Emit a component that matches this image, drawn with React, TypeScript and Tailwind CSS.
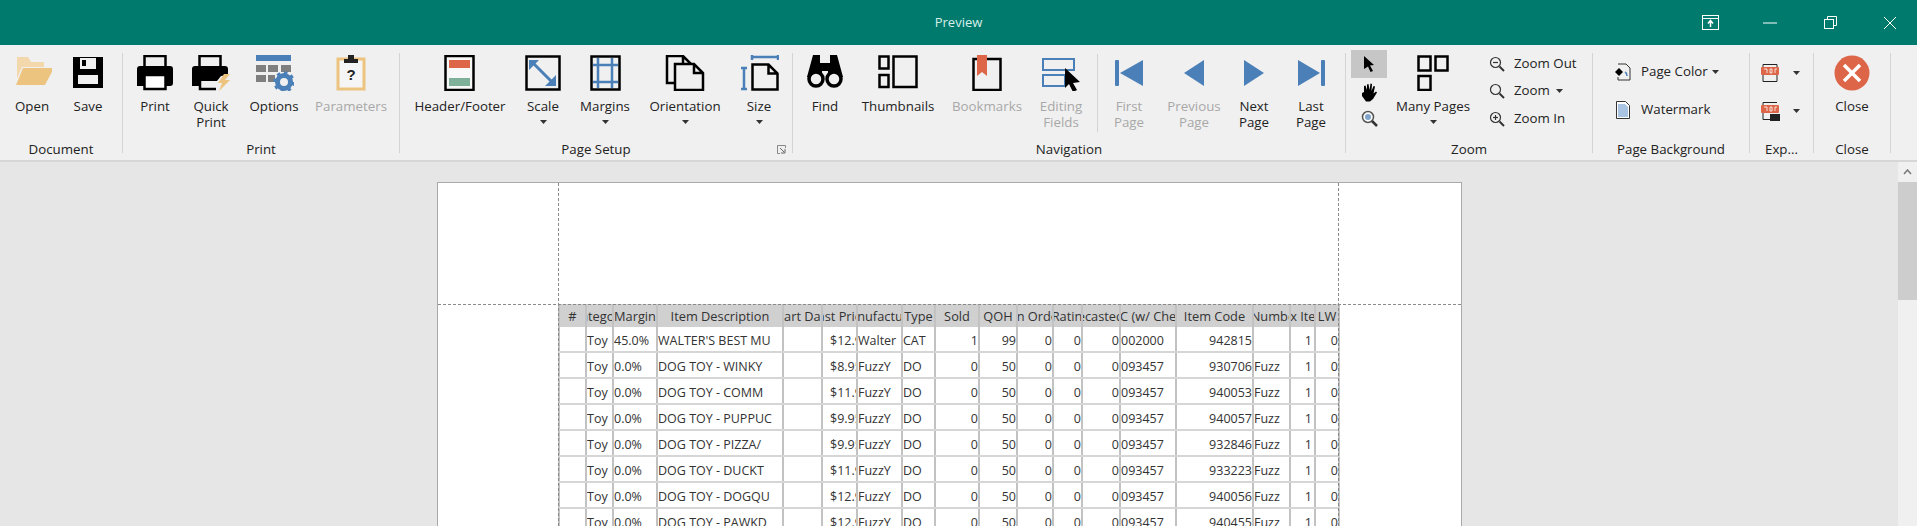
import React from 'react';

const BLUE = '#4a7fb8';
const ORANGE = '#dd6548';
const TAN = '#ecc47f';

function Icon({ children }: { children: React.ReactNode }) {
  return (
    <svg width="40" height="36" viewBox="0 0 40 36" fill="none" className="shrink-0">
      {children}
    </svg>
  );
}

function Caret({ className = '' }: { className?: string }) {
  return (
    <svg width="7" height="4" viewBox="0 0 7 4" className={className}>
      <path d="M0 0h7L3.5 4z" fill="#333" />
    </svg>
  );
}

const PageShape = ({ x, y, w, h, f = 9, sw = 2.5, fill = 'none' }: { x: number; y: number; w: number; h: number; f?: number; sw?: number; fill?: string }) => (
  <path
    d={`M${x} ${y}h${w - f}l${f} ${f}v${h - f}h${-w}zM${x + w - f} ${y}v${f}h${f}`}
    stroke="#000"
    strokeWidth={sw}
    fill={fill}
  />
);

const icons = {
  open: (
    <Icon>
      <path d="M5 2h11l3 5h13v5H10L5 24z" fill="#f3d8ab" />
      <path d="M11 13h31l-9 17H4z" fill={TAN} />
    </Icon>
  ),
  save: (
    <Icon>
      <path fillRule="evenodd" d="M5 2h30v31H5zM12 3v11h16V3zM10 20v9h20v-9z" fill="#000" />
      <rect x="14" y="5" width="4" height="6" fill="#000" />
    </Icon>
  ),
  print: (
    <Icon>
      <rect x="9.500" y="1" width="21" height="14" stroke="#000" strokeWidth="2.500" fill="#f0f0f0" />
      <path d="M5 11h30a3 3 0 0 1 3 3v14a3 3 0 0 1-3 3H2V14a3 3 0 0 1 3-3z" fill="#000" />
      <rect x="9.500" y="20" width="21" height="14" stroke="#000" strokeWidth="2.500" fill="#fff" />
    </Icon>
  ),
  quick: (
    <Icon>
      <rect x="8.500" y="1" width="21" height="14" stroke="#000" strokeWidth="2.500" fill="#f0f0f0" />
      <path d="M4 11h30a3 3 0 0 1 3 3v6l-7 1-4 5H8v5H1V14a3 3 0 0 1 3-3z" fill="#000" />
      <path d="M9 19.500h19M9 19.500v14.500h16" stroke="#000" strokeWidth="2.500" />
      <path d="M33 19h6l-5 6h5L28 36l3-8h-4z" fill={TAN} />
    </Icon>
  ),
  options: (
    <Icon>
      <rect x="2" y="0" width="35" height="6" fill={BLUE} />
      <g fill="#7f7f7f">
        <rect x="2" y="10" width="10" height="7" />
        <rect x="14" y="10" width="10" height="7" />
        <rect x="27" y="10" width="10" height="7" />
        <rect x="2" y="20" width="10" height="7" />
        <rect x="14" y="20" width="7" height="7" />
      </g>
      <circle cx="30" cy="27" r="6.500" stroke={BLUE} strokeWidth="5" fill="#f0f0f0" />
      <circle cx="30" cy="27" r="9.500" stroke={BLUE} strokeWidth="2.500" strokeDasharray="3.500 3.900" />
    </Icon>
  ),
  parameters: (
    <Icon>
      <rect x="7" y="4" width="26" height="30" stroke={TAN} strokeWidth="3" fill="#f5f5f5" />
      <path d="M13 8V4h4V0h6v4h4v4z" fill="#222" />
      <text x="20" y="25" textAnchor="middle" fontSize="15" fontWeight="700" fontFamily="Liberation Sans, sans-serif" fill="#222">?</text>
    </Icon>
  ),
  header: (
    <Icon>
      <rect x="5.500" y="1" width="28" height="34" stroke="#000" strokeWidth="2.500" fill="#f8f8f8" />
      <rect x="9" y="5" width="21" height="8" fill={ORANGE} />
      <rect x="9" y="23" width="21" height="8" fill="#7fb09a" />
    </Icon>
  ),
  scale: (
    <Icon>
      <rect x="3.500" y="1.500" width="33" height="33" stroke="#000" strokeWidth="2.500" />
      <path d="M9 7l20 20" stroke={BLUE} strokeWidth="3" />
      <path d="M6 5h10L6 15zM33 31H22l11-11z" fill={BLUE} />
    </Icon>
  ),
  margins: (
    <Icon>
      <rect x="6.500" y="1.500" width="28" height="33" stroke="#000" strokeWidth="2.500" />
      <path d="M13 3v30M27 3v30M8 10h25M8 27h25" stroke={BLUE} strokeWidth="2.500" />
    </Icon>
  ),
  orientation: (
    <Icon>
      <PageShape x={2} y={1} w={25} h={27} />
      <PageShape x={10} y={9} w={28} h={26} fill="#f0f0f0" />
    </Icon>
  ),
  size: (
    <Icon>
      <path d="M13 2h26M13 0v5M39 0v5M5 13v21M2 13h6M2 34h6" stroke={BLUE} strokeWidth="2.500" />
      <PageShape x={13.500} y={9.500} w={25} h={25} />
    </Icon>
  ),
  find: (
    <Icon>
      <path d="M8 0h7v8h10V0h7l6 22H23v-6h-6v6H2z" fill="#000" />
      <circle cx="11" cy="24" r="7" stroke="#000" strokeWidth="3.500" fill="#f0f0f0" />
      <circle cx="29" cy="24" r="7" stroke="#000" strokeWidth="3.500" fill="#f0f0f0" />
    </Icon>
  ),
  thumbs: (
    <Icon>
      <g stroke="#000" strokeWidth="2.500">
        <rect x="1.500" y="1.500" width="9" height="12" />
        <rect x="1.500" y="20" width="9" height="12" />
        <rect x="15.500" y="1.500" width="23" height="30.500" />
      </g>
    </Icon>
  ),
  bookmarks: (
    <Icon>
      <rect x="6.500" y="4" width="27" height="31" stroke="#000" strokeWidth="2.500" />
      <path d="M10 0h10v21l-5-4-5 4z" fill={ORANGE} />
    </Icon>
  ),
  editing: (
    <Icon>
      <g stroke={BLUE} strokeWidth="2">
        <rect x="2" y="4" width="31" height="11" />
        <rect x="2" y="20" width="22" height="11" />
      </g>
      <path d="M24 13l15 14-7 1 4 7-4 2-4-8-4 4z" fill="#000" />
    </Icon>
  ),
  first: (
    <Icon>
      <rect x="6" y="5" width="4" height="26" rx="1" fill={BLUE} />
      <path d="M34 5v26L11 18z" fill={BLUE} />
    </Icon>
  ),
  prev: (
    <Icon>
      <path d="M30 5v26L10 18z" fill={BLUE} />
    </Icon>
  ),
  next: (
    <Icon>
      <path d="M10 5v26l20-13z" fill={BLUE} />
    </Icon>
  ),
  last: (
    <Icon>
      <path d="M7 5v26l22-13z" fill={BLUE} />
      <rect x="30" y="5" width="4" height="26" rx="1" fill={BLUE} />
    </Icon>
  ),
  many: (
    <Icon>
      <g stroke="#000" strokeWidth="2.500">
        <rect x="5.500" y="1.500" width="12" height="14" />
        <rect x="22.500" y="1.500" width="12" height="14" />
        <rect x="5.500" y="21" width="12" height="14" />
      </g>
    </Icon>
  ),
  close: (
    <Icon>
      <circle cx="20" cy="18" r="17.500" fill={ORANGE} />
      <path d="M12 10l16 16M28 10L12 26" stroke="#fff" strokeWidth="3.500" />
    </Icon>
  ),
};

function RibbonButton({ w, icon, label, line2, disabled, caret }: { w: string; icon: React.ReactNode; label: string; line2?: string; disabled?: boolean; caret?: boolean }) {
  return (
    <div className={`${w} flex flex-col items-center shrink-0 pt-[9px]`}>
      {icon}
      <div className={`mt-[7px] text-center leading-4 whitespace-nowrap ${disabled ? 'text-[#a8a8a8]' : 'text-[#222]'}`}>
        <div>{label}</div>
        {line2 && <div>{line2}</div>}
      </div>
      {caret && <Caret className="mt-[6px]" />}
    </div>
  );
}

function Group({ w, label, children }: { w: string; label: string; children: React.ReactNode }) {
  return (
    <div className={`${w} shrink-0 flex flex-col`}>
      <div className="flex h-[95px]">{children}</div>
      <div className="text-center leading-4 text-[#222]">{label}</div>
    </div>
  );
}

const Sep = () => <div className="w-px shrink-0 my-[7px] bg-[#d4d4d4]" />;

function Lens({ mode }: { mode: 'out' | 'plain' | 'in' }) {
  return (
    <svg width="16" height="16" viewBox="0 0 16 16" fill="none" stroke="#333" strokeWidth="1.200" className="shrink-0">
      <circle cx="6.500" cy="6.500" r="5" />
      <path d="M10.500 10.500L15 15" strokeWidth="2" />
      {mode !== 'plain' && <path d="M4 6.500h5" />}
      {mode === 'in' && <path d="M6.500 4v5" />}
    </svg>
  );
}

const zoomItems = [
  { mode: 'out' as const, label: 'Zoom Out' },
  { mode: 'plain' as const, label: 'Zoom', caret: true },
  { mode: 'in' as const, label: 'Zoom In' },
];

const columns = [27, 27, 44, 126, 39, 35, 45, 33, 44, 38, 36, 29, 38, 56, 77, 37, 25, 24];
const headers = [
  { text: '#' },
  { text: 'Category' },
  { text: 'Margin' },
  { text: 'Item Description' },
  { text: 'Start Date' },
  { text: 'Last Price' },
  { text: 'Manufacturer' },
  { text: 'Type' },
  { text: 'Sold' },
  { text: 'QOH' },
  { text: 'On Order' },
  { text: 'Rating', shift: 'translate-x-[3px]' },
  { text: 'Forecasted', shift: '-translate-x-[10px]' },
  { text: 'UPC (w/ Check)' },
  { text: 'Item Code' },
  { text: 'Number', shift: 'translate-x-[4px]' },
  { text: 'Max Items' },
  { text: 'LW' },
];

const rows = [
  ['45.0%', "WALTER'S BEST MU", '$12.99', 'Walter', 'CAT', '1', '99', '002000', '942815', ''],
  ['0.0%', 'DOG TOY - WINKY', '$8.95', 'FuzzY', 'DO', '0', '50', '093457', '930706', 'Fuzz'],
  ['0.0%', 'DOG TOY - COMM', '$11.95', 'FuzzY', 'DO', '0', '50', '093457', '940053', 'Fuzz'],
  ['0.0%', 'DOG TOY - PUPPUC', '$9.95', 'FuzzY', 'DO', '0', '50', '093457', '940057', 'Fuzz'],
  ['0.0%', 'DOG TOY - PIZZA/', '$9.95', 'FuzzY', 'DO', '0', '50', '093457', '932846', 'Fuzz'],
  ['0.0%', 'DOG TOY - DUCKT', '$11.95', 'FuzzY', 'DO', '0', '50', '093457', '933223', 'Fuzz'],
  ['0.0%', 'DOG TOY - DOGQU', '$12.95', 'FuzzY', 'DO', '0', '50', '093457', '940056', 'Fuzz'],
  ['0.0%', 'DOG TOY - PAWKD', '$12.95', 'FuzzY', 'DO', '0', '50', '093457', '940455', 'Fuzz'],
];

function ReportTable() {
  const cell = 'border-x-2 border-b-2 border-x-[#c2c2c2] border-b-[#d6d6d6] overflow-hidden whitespace-nowrap p-0';
  const inner = 'h-[24px] leading-[27px] overflow-hidden whitespace-nowrap';
  return (
    <table className="table-fixed border-collapse w-[780px] text-[#333] text-[12.5px]">
      <colgroup>
        {columns.map((c, i) => (
          <col key={i} style={{ width: c }} />
        ))}
      </colgroup>
      <thead>
        <tr className="bg-[#d0d0d0]">
          {headers.map((h) => (
            <th key={h.text} className="border-x-2 border-[#c2c2c2] p-0 font-normal text-[12.8px]">
              <div className="h-[23px] leading-[25px] flex justify-center overflow-hidden whitespace-nowrap">
                <span className={`shrink-0 ${h.shift ?? ''}`}>{h.text}</span>
              </div>
            </th>
          ))}
        </tr>
      </thead>
      <tbody>
        {rows.map((r) => (
          <tr key={r[7] + r[8]}>
            <td className={cell}><div className={inner} /></td>
            <td className={cell}><div className={inner}>Toy</div></td>
            <td className={cell}><div className={inner}>{r[0]}</div></td>
            <td className={cell}><div className={inner}>{r[1]}</div></td>
            <td className={cell}><div className={inner} /></td>
            <td className={cell}><div className={`${inner} pl-[7px]`}>{r[2]}</div></td>
            <td className={cell}><div className={inner}>{r[3]}</div></td>
            <td className={cell}><div className={inner}>{r[4]}</div></td>
            <td className={cell}><div className={`${inner} text-right`}>{r[5]}</div></td>
            <td className={cell}><div className={`${inner} text-right`}>{r[6]}</div></td>
            <td className={cell}><div className={`${inner} text-right`}>0</div></td>
            <td className={cell}><div className={`${inner} text-right`}>0</div></td>
            <td className={cell}><div className={`${inner} text-right`}>0</div></td>
            <td className={cell}><div className={inner}>{r[7]}</div></td>
            <td className={cell}><div className={`${inner} text-right`}>{r[8]}</div></td>
            <td className={cell}><div className={inner}>{r[9]}</div></td>
            <td className={cell}><div className={`${inner} text-right pr-[2px]`}>1</div></td>
            <td className={cell}><div className={`${inner} text-right`}>0</div></td>
          </tr>
        ))}
      </tbody>
    </table>
  );
}

export default function App() {
  return (
    <div className="h-[526px] w-[1917px] overflow-hidden flex flex-col bg-[#e6e6e6] text-[13.3px] font-['Open_Sans',sans-serif]">
      {/* Title bar */}
      <div className="h-[45px] shrink-0 bg-[#007a6c] flex items-center text-white">
        <div className="flex-1" />
        <div className="w-[60px] text-center text-[#d8efeb] text-[13px]">Preview</div>
        <div className="flex-1 flex items-center justify-end gap-[6px]">
          <div className="w-[54px] flex items-center justify-center">
            <svg width="17" height="15" viewBox="0 0 17 15" fill="none" stroke="#fff">
              <rect x="0.500" y="0.500" width="16" height="14" />
              <path d="M1 3.500h15" />
              <path d="M8.500 12V6M6 8.500l2.500-3 2.500 3" strokeWidth="1.500" />
            </svg>
          </div>
          <div className="w-[54px] flex items-center justify-center">
            <svg width="14" height="2" viewBox="0 0 14 2"><path d="M0 1h14" stroke="#fff" /></svg>
          </div>
          <div className="w-[54px] flex items-center justify-center">
            <svg width="13" height="13" viewBox="0 0 13 13" fill="none" stroke="#fff">
              <rect x="0.500" y="3.500" width="9" height="9" />
              <path d="M3.500 3.500v-3h9v9h-3" />
            </svg>
          </div>
          <div className="w-[54px] flex items-center justify-center">
            <svg width="14" height="14" viewBox="0 0 14 14"><path d="M1 1l12 12M13 1L1 13" stroke="#fff" /></svg>
          </div>
        </div>
      </div>

      {/* Ribbon */}
      <div className="h-[117px] shrink-0 flex pt-px bg-[#f0f0f0] border-b-2 border-[#d6d6d6]">
        <Group w="w-[122px]" label="Document">
          <div className="w-[8px]" />
          <RibbonButton w="w-[48px]" icon={icons.open} label="Open" />
          <RibbonButton w="w-[64px]" icon={icons.save} label="Save" />
        </Group>
        <Sep />
        <Group w="w-[276px]" label="Print">
          <RibbonButton w="w-[64px]" icon={icons.print} label="Print" />
          <RibbonButton w="w-[48px]" icon={icons.quick} label="Quick" line2="Print" />
          <RibbonButton w="w-[78px]" icon={icons.options} label="Options" />
          <RibbonButton w="w-[76px]" icon={icons.parameters} label="Parameters" disabled />
        </Group>
        <Sep />
        <div className="relative">
          <Group w="w-[392px]" label="Page Setup">
            <RibbonButton w="w-[120px]" icon={icons.header} label="Header/Footer" />
            <RibbonButton w="w-[46px]" icon={icons.scale} label="Scale" caret />
            <RibbonButton w="w-[78px]" icon={icons.margins} label="Margins" caret />
            <RibbonButton w="w-[82px]" icon={icons.orientation} label="Orientation" caret />
            <RibbonButton w="w-[66px]" icon={icons.size} label="Size" caret />
          </Group>
          <svg width="9" height="9" viewBox="0 0 9 9" fill="none" className="absolute right-[6px] bottom-[6px]">
            <path d="M8.500 3V.5H.5v8H3" stroke="#888" />
            <path d="M3 3l4 4M8 4v4H4" stroke="#666" />
          </svg>
        </div>
        <Sep />
        <Group w="w-[552px]" label="Navigation">
          <RibbonButton w="w-[64px]" icon={icons.find} label="Find" />
          <RibbonButton w="w-[82px]" icon={icons.thumbs} label="Thumbnails" />
          <RibbonButton w="w-[96px]" icon={icons.bookmarks} label="Bookmarks" disabled />
          <RibbonButton w="w-[52px]" icon={icons.editing} label="Editing" line2="Fields" disabled />
          <div className="w-[10px]" />
          <div className="w-px h-[78px] mt-[8px] bg-[#d4d4d4]" />
          <RibbonButton w="w-[62px]" icon={icons.first} label="First" line2="Page" disabled />
          <RibbonButton w="w-[68px]" icon={icons.prev} label="Previous" line2="Page" disabled />
          <RibbonButton w="w-[52px]" icon={icons.next} label="Next" line2="Page" />
          <RibbonButton w="w-[62px]" icon={icons.last} label="Last" line2="Page" />
        </Group>
        <Sep />
        <Group w="w-[246px]" label="Zoom">
          <div className="ml-[5px] w-[36px] flex flex-col items-center pt-[4px]">
            <div className="w-[36px] h-[28px] bg-[#c6c6c6] flex items-center justify-center">
              <svg width="12" height="16" viewBox="0 0 12 16"><path d="M1 0l10 9-4 .5 3 5.500-2.500 1-2.500-5.500L1 13z" fill="#000" /></svg>
            </div>
            <div className="h-[27px] flex items-center">
              <svg width="20" height="20" viewBox="0 0 20 20">
                <path d="M3 11l2-1V4l1.500-.5L8 8V2.500L9.500 2l1 6 1-6.500 1.500.500-.5 7 2-5 1.500.5-1.500 7 2.500-2 1 1-4 6.500-3 2.500H7L3 14z" fill="#000" />
              </svg>
            </div>
            <div className="h-[27px] flex items-center">
              <svg width="17" height="17" viewBox="0 0 17 17" fill="none">
                <circle cx="7" cy="7" r="5.500" stroke="#555" strokeWidth="1.500" fill="#fff" />
                <circle cx="7" cy="7" r="3" fill={BLUE} opacity="0.700" />
                <path d="M11 11l5 5" stroke="#333" strokeWidth="2.500" />
              </svg>
            </div>
          </div>
          <div className="ml-[3px]">
            <RibbonButton w="w-[86px]" icon={icons.many} label="Many Pages" caret />
          </div>
          <div className="ml-[13px] flex flex-col pt-[4px]">
            {zoomItems.map((z) => (
              <div key={z.label} className="h-[27.5px] flex items-center gap-[9px] text-[#222] whitespace-nowrap">
                <Lens mode={z.mode} />
                <span>{z.label}</span>
                {z.caret && <Caret className="-ml-[3px]" />}
              </div>
            ))}
          </div>
        </Group>
        <Sep />
        <Group w="w-[156px]" label="Page Background">
          <div className="pl-[22px] pt-[18px] flex flex-col gap-[22px] text-[#222]">
            <div className="h-[16px] flex items-center gap-[10px]">
              <svg width="16" height="18" viewBox="0 0 16 18" fill="none" className="shrink-0">
                <path d="M3 1h8l4 4v12H3v-3" stroke="#333" />
                <path d="M4 5l4 4-4 4-4-4z" fill="#000" />
                <path d="M10 9c2 1 2 3 2 4" stroke={BLUE} strokeWidth="1.500" />
              </svg>
              <span className="whitespace-nowrap">Page Color</span>
              <Caret className="-ml-[6px]" />
            </div>
            <div className="h-[16px] flex items-center gap-[10px]">
              <svg width="16" height="18" viewBox="0 0 16 18" fill="none" className="shrink-0">
                <path d="M1.500.5h9l4 4v13h-13z" stroke="#333" fill="#fff" />
                <path d="M3 3h7l3 3v10H3z" fill="#a8c4e2" />
              </svg>
              <span>Watermark</span>
            </div>
          </div>
        </Group>
        <Sep />
        <Group w="w-[63px]" label="Exp...">
          <div className="pl-[10px] pt-[17px] flex flex-col gap-[19px]">
            <div className="h-[19px] flex items-center gap-[13px]">
              <svg width="20" height="20" viewBox="0 0 20 20" fill="none" className="shrink-0">
                <path d="M3 1.500h14v17H3z" stroke="#222" />
                <rect x="1" y="4" width="18" height="8" rx="1" fill={ORANGE} />
                <path d="M4 6h3v4M10 6v4h2V6zM15 6v4M15 6h2" stroke="#fff" strokeWidth="0.800" />
              </svg>
              <Caret />
            </div>
            <div className="h-[19px] flex items-center gap-[13px]">
              <svg width="20" height="20" viewBox="0 0 20 20" fill="none" className="shrink-0">
                <path d="M3 1.500h14M3 1.500v17h8" stroke="#222" />
                <rect x="1" y="4" width="18" height="8" rx="1" fill={ORANGE} />
                <path d="M4 6h3v4M10 6v4h2V6zM15 6v4M15 6h2" stroke="#fff" strokeWidth="0.800" />
                <rect x="10" y="13" width="10" height="7" fill="#222" />
              </svg>
              <Caret />
            </div>
          </div>
        </Group>
        <Sep />
        <Group w="w-[76px]" label="Close">
          <RibbonButton w="w-[76px]" icon={icons.close} label="Close" />
        </Group>
        <Sep />
      </div>

      {/* Preview area */}
      <div className="flex-1 flex min-h-0">
        <div className="flex-1 min-w-0 pt-[20px] pl-[437px] overflow-hidden">
          <div className="relative w-[1025px] h-[600px] bg-white border border-[#a9a9a9]">
            <div className="pt-[121px] pl-[120px]">
              <ReportTable />
            </div>
            <div className="absolute top-0 bottom-0 left-[120px] border-l border-dashed border-[#8a8a8a]" />
            <div className="absolute top-0 bottom-0 left-[900px] border-l border-dashed border-[#8a8a8a]" />
            <div className="absolute left-0 right-0 top-[121px] border-t border-dashed border-[#8a8a8a]" />
          </div>
        </div>
        <div className="w-[19px] shrink-0 bg-[#f0f0f0] flex flex-col">
          <div className="h-[20px] flex items-center justify-center">
            <svg width="9" height="6" viewBox="0 0 9 6" fill="none"><path d="M1 5l3.500-4L8 5" stroke="#777" strokeWidth="1.500" /></svg>
          </div>
          <div className="h-[118px] bg-[#cdcdcd]" />
        </div>
      </div>
    </div>
  );
}
